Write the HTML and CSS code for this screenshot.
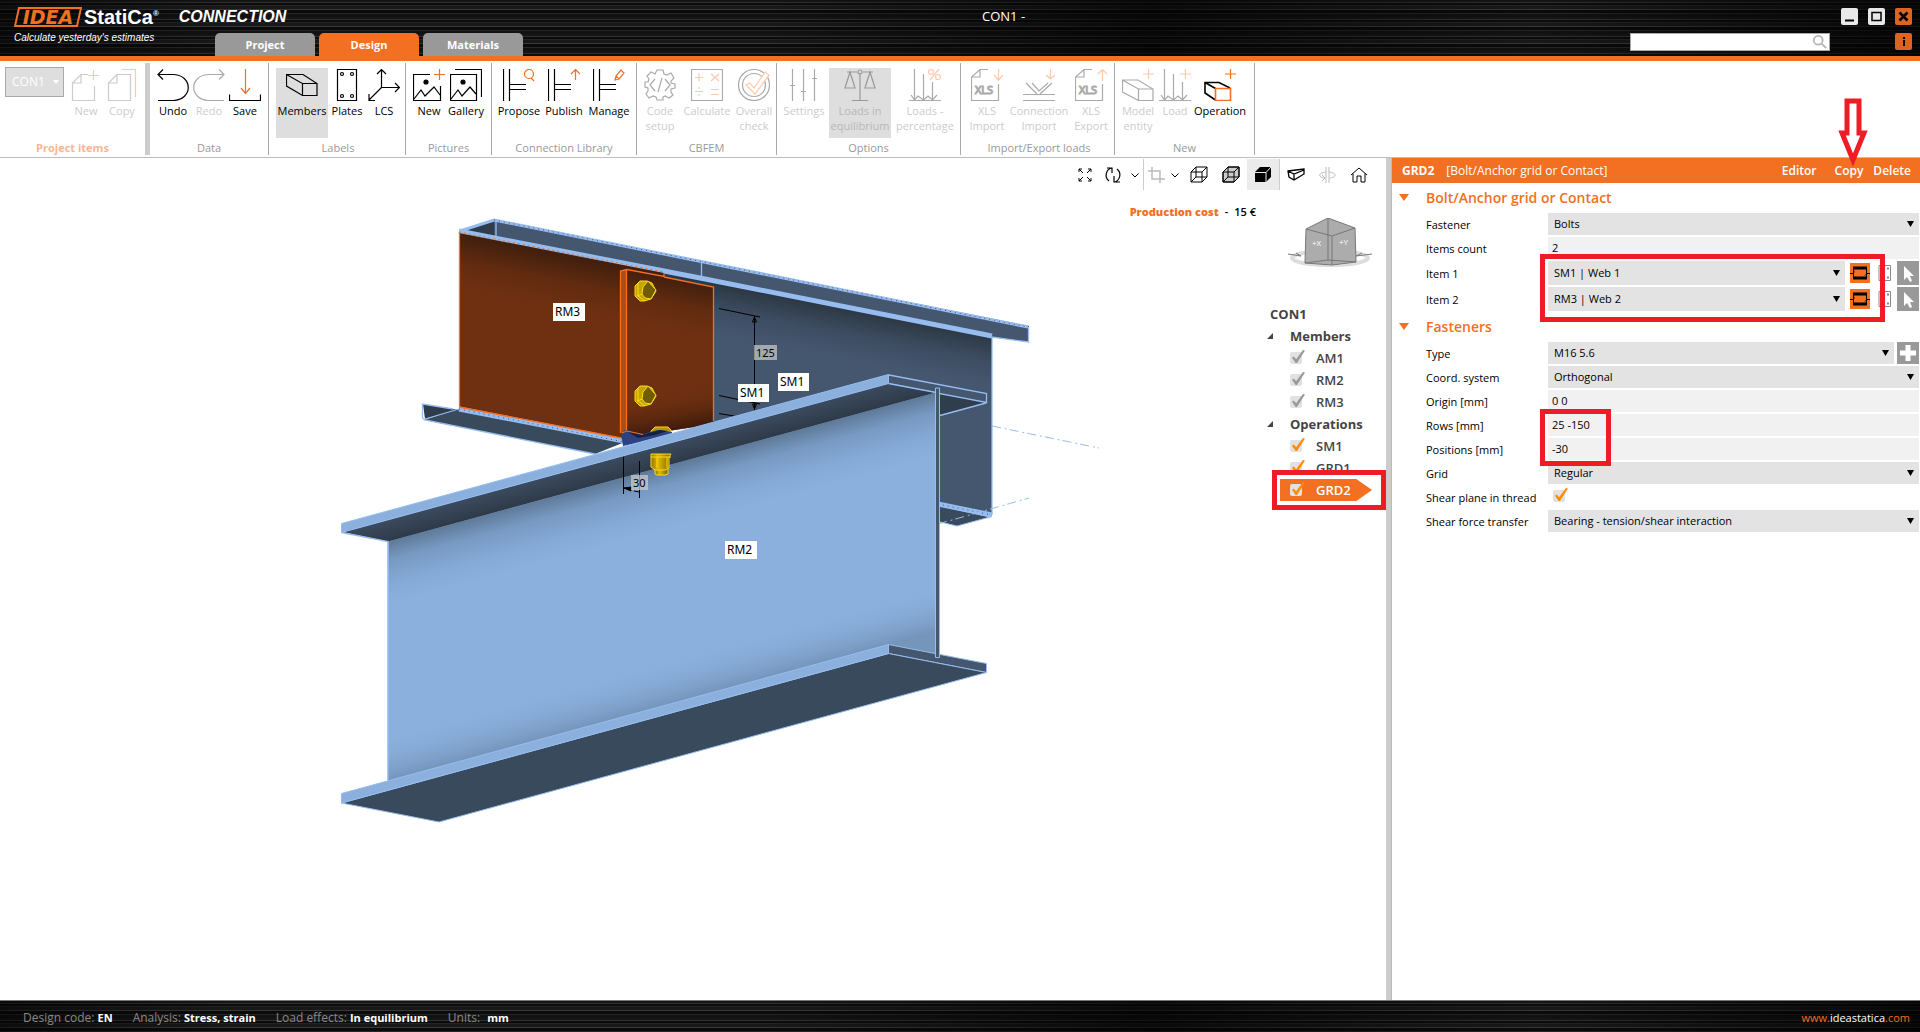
FILE: index.html
```html
<!DOCTYPE html>
<html lang="en">
<head>
<meta charset="utf-8">
<title>CON1 - IDEA StatiCa Connection</title>
<link rel="stylesheet" href="styles.css">
</head>
<body>
<svg class="defs" aria-hidden="true">
  <symbol id="doc-plus" viewBox="0 0 32 32"><path d="M18 5.500H11L2.500 14V31.500H24.500V17M11 5.500V14H2.500"/><path class="accent" d="M23.500 1V11M18 6.500H29"/></symbol>
  <symbol id="doc-copy" viewBox="0 0 32 32"><path d="M11 5.500H24.500V31.500H2.500V14ZM11 5.500V14H2.500"/><path class="accent" d="M16 .5H29.500V28"/></symbol>
  <symbol id="undo" viewBox="0 0 32 32"><path d="M1 31.500H17C36 30 36 7 17 5.500H1M6 .5L1 5.500L6 10.500"/></symbol>
  <symbol id="redo" viewBox="0 0 32 32"><path d="M31 31.500H15C-4 30 -4 7 15 5.500H31M26 .5L31 5.500L26 10.500"/></symbol>
  <symbol id="save" viewBox="0 0 32 32"><path d="M.5 25.500V31.500H31.500V25.500"/><path class="accent" d="M16.500 0V24M12 19L16.500 24.500L21 19"/></symbol>
  <symbol id="beam" viewBox="0 0 32 32"><path d="M.5 5.500H17L31 14.500V26.500H16.500L.5 17ZM.5 5.500L16.500 14.500V26.500M16.500 14.500H31"/></symbol>
  <symbol id="plates" viewBox="0 0 32 32"><path d="M6.500 .5H25.500V31.500H6.500Z"/><circle cx="11" cy="5" r="1.500"/><circle cx="21" cy="5" r="1.500"/><circle cx="11" cy="27" r="1.500"/><circle cx="21" cy="27" r="1.500"/></symbol>
  <symbol id="lcs" viewBox="0 0 32 32"><path d="M13.500 18.500V1M9 5L13.500 .5L18 5M13.500 18.500H31M27 14L31.500 18.500L27 23M13.500 18.500L1 31M1 25V31.500H7"/></symbol>
  <symbol id="pic-new" viewBox="0 0 32 32"><path d="M17 5.500H.5V31.500H27.500V17M1 30L8 21L12 27L21 18L27 26"/><circle class="solid" cx="13" cy="13" r="2"/><path class="accent" d="M26.500 0V11M21 5.500H32"/></symbol>
  <symbol id="gallery" viewBox="0 0 32 32"><path d="M.5 5.500H26.500V31.500H.5ZM5 .5H31.500V28M1 30L8 21L12 27L20 18L26 25"/><circle class="solid" cx="13" cy="13" r="2"/></symbol>
  <symbol id="lib-search" viewBox="0 0 32 32"><path d="M.5 0V32M6.500 0V32M6.500 15.500H23M6.500 20.500H23"/><circle class="accent" cx="26" cy="5" r="4.500"/><path class="accent" d="M28 9L31 12"/></symbol>
  <symbol id="lib-up" viewBox="0 0 32 32"><path d="M.5 0V32M6.500 0V32M6.500 15.500H23M6.500 20.500H23"/><path class="accent" d="M27.500 11V1M23 5L27.500 .5L32 5"/></symbol>
  <symbol id="lib-edit" viewBox="0 0 32 32"><path d="M.5 0V32M6.500 0V32M6.500 15.500H23M6.500 20.500H23"/><path class="accent" d="M22 11L23 7L28 1L31 4L26 10ZM23 7L26 10"/></symbol>
  <symbol id="gear" viewBox="0 0 32 32"><path d="M13 1H19L20 5L23 6L27 4L30 9L27 12V14L31 15V19L27 20L27 23L29 26L25 29L21 27L19 28V31H13L12 28L9 27L5 29L2 25L4 22L4 19L1 18V13L4 13L5 10L3 7L7 3L11 5ZM11 10L6 16L11 22M21 10L26 16L21 22M18 9L14 23"/></symbol>
  <symbol id="calc" viewBox="0 0 32 32"><path d="M.5 .5H31.500V31.500H.5Z"/><path class="accent" d="M4 8.500H12M8 4.500V12.500M20 5L28 12M28 5L20 12M4 22.500H12M8 18V20M8 25V27M20 20.500H28M20 25.500H28"/></symbol>
  <symbol id="overall" viewBox="0 0 32 32"><circle cx="16" cy="16" r="15.500"/><circle cx="16" cy="16" r="11.500"/><path class="accent halo" d="M8 16L12 14L16 19L27 3L31 6L17 25Z"/></symbol>
  <symbol id="sliders" viewBox="0 0 32 32"><path d="M4.500 0V32M15.500 0V32M26.500 0V32M2 16.500H7M13 22.500H18M24 9.500H29"/></symbol>
  <symbol id="scales" viewBox="0 0 32 32"><path d="M16 4V31M8 31.500H24M3 3H13M19 3H29M6 3L1 19H11ZM26 3L21 19H31Z"/><circle cx="16" cy="3" r="2"/></symbol>
  <symbol id="loads-pct" viewBox="0 0 32 32"><path d="M0 31.500H32M5.500 0V31M14.500 5V31M23.500 13V31M2 26L5.500 31L9 27L14.500 31L19 27L23.500 31L28 26"/><circle class="accent" cx="22" cy="3" r="2.500"/><circle class="accent" cx="29" cy="8" r="2.500"/><path class="accent" d="M30 0L21 11"/></symbol>
  <symbol id="xls-down" viewBox="0 0 32 32"><path d="M17 .5H9L.5 8V31.500H27.500V15M9 .5V8H.5"/><text x="4" y="25">XLS</text><path class="accent" d="M27.500 0V11M23 6L27.500 11L32 6"/></symbol>
  <symbol id="xls-up" viewBox="0 0 32 32"><path d="M17 .5H9L.5 8V31.500H27.500V15M9 .5V8H.5"/><text x="4" y="25">XLS</text><path class="accent" d="M27.500 1V12M23 5L27.500 .5L32 5"/></symbol>
  <symbol id="conn-import" viewBox="0 0 32 32"><path d="M0 25.500H32M0 31.500H32M3 14L14 25M9 14L16 22L25 14M17 25L29 14"/><path class="accent" d="M27.500 0V10M23 6L27.500 10L32 6"/></symbol>
  <symbol id="beam-plus" viewBox="0 0 32 32"><path d="M.5 11H16L31 20V31.500H16.500L.5 23ZM.5 11L16.500 20V31.500M16.500 20H31"/><path class="accent" d="M26.500 0V10M21 5H32"/></symbol>
  <symbol id="load-plus" viewBox="0 0 32 32"><path d="M0 31.500H32M5.500 0V31M14.500 5V31M23.500 13V31M2 26L5.500 31L9 27L14.500 31L19 27L23.500 31L28 26"/><path class="accent" d="M26.500 0V10M21 5H32"/></symbol>
  <symbol id="operation" viewBox="0 0 32 32"><path class="bold" d="M11.500 31L1 24V13.500H15L26 19M1 13.500L11.500 19.500"/><path class="accent bold" d="M11.500 19.500H26.500V31.500H11.500Z"/><path class="accent" d="M26.500 0V10M21 5H32"/></symbol>
  <symbol id="chev" viewBox="0 0 10 10"><path d="M1.500 3.500L5 7L8.500 3.500"/></symbol>
  <symbol id="section-i" viewBox="0 0 20 20"><path d="M3 5H17M3 15H17" stroke-width="3"/><path d="M3.500 5V15M16.500 5V15M0 10.500H3L4.500 8.500M15 12.500L17 10.500H20"/></symbol>
  <symbol id="section-p" viewBox="0 0 14 18"><path d="M1 1.500H12.500V16.500H1Z"/><path d="M9 4.500H11M9 13.500H11" stroke-width="2"/></symbol>
  <symbol id="cursor" viewBox="0 0 22 24"><path class="fill" d="M7 5V19L10 16L13 21L15 20L13 15H17Z"/></symbol>
</svg>

<div class="app">
  <header class="titlebar">
    <div class="brand">
      <div class="brand-line">
        <span class="logo"><svg class="logo-frame" viewBox="0 0 68 20" aria-hidden="true"><path d="M5 1H67L63 19H1Z"/></svg><b>IDEA</b></span>
        <span class="product">StatiCa<sup>®</sup></span>
        <span class="module">CONNECTION</span>
      </div>
      <p class="slogan">Calculate yesterday's estimates</p>
    </div>
    <nav class="tabs">
      <button class="tab">Project</button>
      <button class="tab active">Design</button>
      <button class="tab">Materials</button>
    </nav>
    <h1 class="title">CON1 -</h1>
    <div class="window-tools">
      <div class="window-buttons">
        <button class="wbtn" aria-label="Minimize"><svg viewBox="0 0 17 17"><path d="M4 12.500H13" stroke-width="2"/></svg></button>
        <button class="wbtn" aria-label="Maximize"><svg viewBox="0 0 17 17"><path d="M4 4.500H13V12.500H4Z" stroke-width="1.500"/></svg></button>
        <button class="wbtn hot-btn" aria-label="Close"><svg viewBox="0 0 17 17"><path d="M4.500 4.500L12.500 12.500M12.500 4.500L4.500 12.500" stroke-width="2.500"/></svg></button>
      </div>
      <div class="search-row">
        <label class="search"><input type="text" aria-label="Search"><svg viewBox="0 0 18 18"><circle cx="7" cy="7" r="5"/><path d="M11 11L16 16"/></svg></label>
        <button class="wbtn hot-btn" aria-label="Information"><svg viewBox="0 0 17 17"><path d="M9 7V13M9 4V6" stroke-width="2"/></svg></button>
      </div>
    </div>
  </header>

  <section class="ribbon">
    <div class="group items disabled">
      <div class="tools">
        <select class="project-select" aria-label="Project item" disabled><option>CON1</option></select>
        <button class="tool w36"><svg><use href="#doc-plus"/></svg>New</button>
        <button class="tool w36"><svg><use href="#doc-copy"/></svg>Copy</button>
      </div>
      <h2>Project items</h2>
    </div>
    <div class="group g-data">
      <div class="tools">
        <button class="tool w36"><svg><use href="#undo"/></svg>Undo</button>
        <button class="tool w36 off"><svg><use href="#redo"/></svg>Redo</button>
        <button class="tool w36"><svg><use href="#save"/></svg>Save</button>
      </div>
      <h2>Data</h2>
    </div>
    <div class="group g-labels">
      <div class="tools">
        <button class="tool w52 on"><svg><use href="#beam"/></svg>Members</button>
        <button class="tool w36"><svg><use href="#plates"/></svg>Plates</button>
        <button class="tool w36"><svg><use href="#lcs"/></svg>LCS</button>
      </div>
      <h2>Labels</h2>
    </div>
    <div class="group g-pictures">
      <div class="tools">
        <button class="tool w36"><svg><use href="#pic-new"/></svg>New</button>
        <button class="tool w36"><svg><use href="#gallery"/></svg>Gallery</button>
      </div>
      <h2>Pictures</h2>
    </div>
    <div class="group g-library">
      <div class="tools">
        <button class="tool w44"><svg><use href="#lib-search"/></svg>Propose</button>
        <button class="tool w44"><svg><use href="#lib-up"/></svg>Publish</button>
        <button class="tool w44"><svg><use href="#lib-edit"/></svg>Manage</button>
      </div>
      <h2>Connection Library</h2>
    </div>
    <div class="group g-cbfem disabled">
      <div class="tools">
        <button class="tool w36"><svg><use href="#gear"/></svg>Code<br>setup</button>
        <button class="tool w52"><svg><use href="#calc"/></svg>Calculate</button>
        <button class="tool w36"><svg><use href="#overall"/></svg>Overall<br>check</button>
      </div>
      <h2>CBFEM</h2>
    </div>
    <div class="group g-options disabled">
      <div class="tools">
        <button class="tool w44"><svg><use href="#sliders"/></svg>Settings</button>
        <button class="tool w62 on"><svg><use href="#scales"/></svg>Loads in<br>equilibrium</button>
        <button class="tool w62"><svg><use href="#loads-pct"/></svg>Loads -<br>percentage</button>
      </div>
      <h2>Options</h2>
    </div>
    <div class="group g-loads disabled">
      <div class="tools">
        <button class="tool w36"><svg><use href="#xls-down"/></svg>XLS<br>Import</button>
        <button class="tool w62"><svg><use href="#conn-import"/></svg>Connection<br>Import</button>
        <button class="tool w36"><svg><use href="#xls-up"/></svg>XLS<br>Export</button>
      </div>
      <h2>Import/Export loads</h2>
    </div>
    <div class="group g-new">
      <div class="tools">
        <button class="tool w36 off"><svg><use href="#beam-plus"/></svg>Model<br>entity</button>
        <button class="tool w36 off"><svg><use href="#load-plus"/></svg>Load</button>
        <button class="tool w52"><svg><use href="#operation"/></svg>Operation</button>
      </div>
      <h2>New</h2>
    </div>
  </section>

  <main class="workspace">
    <section class="viewport">
      <svg class="model" viewBox="0 158 1386 842" preserveAspectRatio="xMinYMin meet" role="img" aria-label="3D model of the connection">
        <defs>
          <linearGradient id="webTop" gradientUnits="userSpaceOnUse" x1="600" y1="484" x2="616" y2="543"><stop offset="0" stop-color="#5f7a99"/><stop offset=".3" stop-color="#7799c2"/><stop offset=".7" stop-color="#86aad8"/><stop offset="1" stop-color="#8bb0de"/></linearGradient>
          <linearGradient id="webBottom" gradientUnits="userSpaceOnUse" x1="600" y1="723" x2="588" y2="679"><stop offset="0" stop-color="#7595bb"/><stop offset="1" stop-color="#8bb0de" stop-opacity="0"/></linearGradient>
          <linearGradient id="under" gradientUnits="userSpaceOnUse" x1="600" y1="462" x2="606" y2="484"><stop offset="0" stop-color="#3b4b5f"/><stop offset="1" stop-color="#2d3846"/></linearGradient>
          <linearGradient id="rear" gradientUnits="userSpaceOnUse" x1="850" y1="310" x2="841" y2="357"><stop offset="0" stop-color="#2c3844"/><stop offset=".5" stop-color="#3d4c61"/><stop offset="1" stop-color="#45566f"/></linearGradient>
          <linearGradient id="rust" gradientUnits="userSpaceOnUse" x1="590" y1="262" x2="580" y2="312"><stop offset="0" stop-color="#43200d"/><stop offset=".5" stop-color="#622b10"/><stop offset="1" stop-color="#6f3011"/></linearGradient>
          <linearGradient id="rustLow" gradientUnits="userSpaceOnUse" x1="670" y1="390" x2="677" y2="430"><stop offset="0" stop-color="#6f3011" stop-opacity="0"/><stop offset="1" stop-color="#3d1b0a"/></linearGradient>
          <linearGradient id="gold" x1="0" x2="1" y1="0" y2="0"><stop offset="0" stop-color="#8f7400"/><stop offset=".35" stop-color="#e0b900"/><stop offset="1" stop-color="#7b6500"/></linearGradient>
          <g id="head"><path d="M-10 -5L-5 -10H2L7 -8L11 0L6 8L-1 10H-5L-10 5Z" fill="#c5a300" stroke="#ffd91a"/><path d="M-2 -4L3 -10L11 -1L6 8L0 7L-3 3Z" fill="#6f5d00" stroke="#ffd91a"/><path d="M-7 -8V5L0 10M-3 3L-8 5" fill="none" stroke="#ffd91a"/></g>
        </defs>
        <!-- rear channel -->
        <path d="M600 258L992 336V516L720 480Z" fill="url(#rear)"/>
        <path d="M459 231L494 220L1029 326V342L992 337Z" fill="#45566f"/>
        <path d="M462 230L494 222V236Z" fill="#2f3c4b"/>
        <path class="edge3" d="M460 231L494 220L1028 327"/>
        <path d="M459 231L700 278L992 336" fill="none" stroke="#96bcf0" stroke-width="5"/>
        <path class="edge" d="M496 221V237M701.500 262V278M1028.500 327V342L992 337V515"/>
        <path class="dots" d="M494 220L1028 327"/>
        <path d="M936 505L990 517L957 526L936 521Z" fill="#3a4a5d" stroke="#96bcf0"/>
        <path class="edge4" d="M938 504L992 515"/><path class="dots" d="M938 504L992 515"/>
        <path class="axis" d="M992 426L1099 448M938 524L1029 498"/>
        <!-- left channel -->
        <path d="M423 404L459 410L425 419Z" fill="#2f3c4b"/>
        <path d="M424 420L458 409L625 442L595 454Z" fill="#3a4a5d"/>
        <path class="edge" d="M453 409L422.500 404V418L425 420L595 454M425 419L459 409"/>
        <path d="M459 233L664 273V284L714 287V424L622 438L459 407Z" fill="url(#rust)"/>
        <path d="M627 270L714 287V424L627 432Z" fill="url(#rust)"/>
        <path d="M622 380H714V424L622 438Z" fill="url(#rustLow)"/>
        <path class="edge4" d="M459 409L624 441"/><path class="dots" d="M459 409L624 442"/>
        <path d="M621 271L627 269V433H621Z" fill="#a94d19"/>
        <path class="hot" d="M459.500 407V232M459 407L621 438M620.500 433V271L627 269.500L664 276.500V273M626.500 270V432M664 277L713.500 287V421"/>
        <path d="M459 232L664 272" fill="none" stroke="#f36f21" stroke-dasharray="2 3"/>
        <use href="#head" x="645" y="291"/><use href="#head" x="645" y="396"/>
        <path d="M651 431L655 427H668L671 430V437H651Z" fill="#b69500" stroke="#ffd91a"/>
        <path d="M621 434L625 430L642 434L658 430L672 432V436L623 446Z" fill="#2d4283"/>
        <path d="M628 432L642 435L660 430L668 431L655 435L638 438Z" fill="#17203d"/>
        <path d="M622 433L627 431L643 434.500" fill="none" stroke="#f36f21"/>
        <!-- dimension in the back -->
        <path class="dim" d="M719 308.500L760 317M754.500 316V410M719 395.500L760 404M719 413.500L734 416M754.500 317L752.500 322H756.500ZM754.500 409L752.500 404H756.500Z"/>
        <!-- front beam -->
        <path d="M889 375L986 393V403L889 384Z" fill="#45566f"/>
        <path d="M936 392L984 403L940 415Z" fill="#303d4c"/>
        <path class="edge" d="M889 375L986.500 393.500V402.500L889 384M986 403L940 415.500"/>
        <path d="M388 541L936 392V654L888 645L388 781Z" fill="url(#webTop)" stroke="#96bcf0"/>
        <path d="M388 720L888 584L936 594V654L888 645L388 781Z" fill="url(#webBottom)"/>
        <path d="M342 532L889 383.500L936 392.500L388 541.500Z" fill="url(#under)"/>
        <path d="M341.500 523.500L888.500 374.500V383.500L341.500 532.500Z" fill="#8bb0de" stroke="#96bcf0"/>
        <path class="edge" d="M341.500 532.500L388 541.500V780M888.500 383.500L936 392.500"/>
        <path d="M888.500 644.500L986.500 663.500V672.500L888.500 653.500Z" fill="#45566f" stroke="#96bcf0"/>
        <path d="M341.500 803L888.500 653.500L986.500 672.500L439 822Z" fill="#3a4a5d" stroke="#96bcf0"/>
        <path d="M341.500 793.500L888.500 644.500V653.500L341.500 803Z" fill="#8bb0de" stroke="#96bcf0"/>
        <path d="M935.500 388V657.500H939.500V388Z" fill="#45566f" stroke="#96bcf0"/>
        <!-- lower bolt -->
        <path d="M655 468H668V474L665 475H657L655 474Z" fill="url(#gold)" stroke="#ffd91a"/>
        <path d="M651 454H671L669 457V468L665 470H655L651 467Z" fill="url(#gold)" stroke="#ffd91a"/>
        <path d="M651 457H671M657 457V468M667 457V468" fill="none" stroke="#ffd91a"/>
        <path class="dim" d="M623.500 457V494M639.500 461V498M624 488L631 490M634 491L639 492"/>
        <path class="dim" d="M624 488L631 487V491Z" fill="#000"/>
        <g class="tags"><rect class="dimtag" x="754" y="345" width="23" height="15"/><text x="756" y="357" class="small">125</text>
          <rect class="dimtag" x="631" y="475" width="17" height="15"/><text x="633" y="487" class="small">30</text>
          <rect x="553" y="303" width="32" height="18"/><text x="555" y="316">RM3</text>
          <rect x="738" y="384" width="31" height="18"/><text x="740" y="397">SM1</text>
          <rect x="778" y="373" width="31" height="18"/><text x="780" y="386">SM1</text>
          <rect x="725" y="541" width="32" height="18"/><text x="727" y="554">RM2</text></g>
      </svg>

      <div class="overlay">
        <div class="viewbar">
          <button class="vb w28" aria-label="Zoom all"><svg viewBox="0 0 18 18"><path d="M3 6V3H6M3 3L7 7M12 3H15V6M15 3L11 7M3 12V15H6M3 15L7 11M12 15H15V12M15 15L11 11"/></svg></button>
          <button class="vb w28" aria-label="Rotate"><svg viewBox="0 0 18 18"><path d="M5 15C0 11 2 3 8 2M3 2H8V7M13 3C18 7 16 14 11 16M16 16H10V10" stroke-width="1.200"/></svg></button>
          <button class="vb w16" aria-label="Rotate options"><svg class="mini"><use href="#chev"/></svg></button>
          <button class="vb w24 rule-left pale" aria-label="Crop"><svg viewBox="0 0 18 18"><path d="M5 1V13H18M1 5H13V17" stroke-width="1.500"/></svg></button>
          <button class="vb w16" aria-label="Crop options"><svg class="mini"><use href="#chev"/></svg></button>
          <button class="vb" aria-label="Wireframe"><svg viewBox="0 0 18 18"><path d="M1 6H12V16H1ZM1 6L6 1H17L12 6M17 1V11L12 16M6 1V11H17M6 11L1 16"/></svg></button>
          <button class="vb" aria-label="Transparent"><svg viewBox="0 0 18 18"><path d="M1 6L6 1H17V11L12 16H1Z" fill="#ccc"/><path d="M1 6H12V16H1ZM1 6L6 1H17L12 6M17 1V11L12 16M6 1V11H17M6 11L1 16"/></svg></button>
          <button class="vb pressed" aria-label="Solid"><svg viewBox="0 0 18 18"><path class="fill" d="M1 6L6 1H17V11L12 16H1Z"/><path d="M1 6.500H12L17 1M12 6.500V16" stroke="#ebebeb"/></svg></button>
          <button class="vb rule-left" aria-label="Members"><svg viewBox="0 0 18 18"><path d="M1 5L9 4L17 3V8L7 14L2 11ZM1 5L7 8L17 4M7 8V14" stroke-width="1.300"/></svg></button>
          <button class="vb pale" aria-label="Mirror"><svg viewBox="0 0 18 18"><path d="M8 1V17M11 1V17M8 6C0 7 0 11 6 12M11 6C19 7 19 11 12 12M4 9L7 12L4 15"/></svg></button>
          <button class="vb" aria-label="Home"><svg viewBox="0 0 18 18"><path d="M1 9L9 2L17 9M3 7.500V16H7V10H11V16H15V7.500"/></svg></button>
        </div>
        <p class="cost"><b>Production cost</b> <span>-</span> <span>15 €</span></p>
        <svg class="navcube" viewBox="0 0 84 50" aria-hidden="true">
          <ellipse cx="42" cy="40" rx="38" ry="7" fill="none" stroke="#ddd" stroke-width="4"/>
          <path d="M18 11L40 0L67 10L68 44L44 47L17 45Z" fill="#acacac" stroke="#777"/>
          <path d="M18 11L44 18L67 10M44 18V47M40 0V42L17 45M40 42L68 44" fill="none" stroke="#777"/>
          <path d="M0 36L13 38L8 35M84 36L68 38L74 35" fill="none" stroke="#777"/>
          <text x="24" y="28">+X</text><text x="51" y="27">+Y</text>
        </svg>
        <div class="tree">
          <p class="root">CON1</p>
          <p class="branch">Members</p>
          <label class="leaf locked"><input type="checkbox" checked>AM1</label>
          <label class="leaf locked"><input type="checkbox" checked>RM2</label>
          <label class="leaf locked"><input type="checkbox" checked>RM3</label>
          <p class="branch">Operations</p>
          <label class="leaf"><input type="checkbox" checked>SM1</label>
          <label class="leaf"><input type="checkbox" checked>GRD1</label>
          <label class="leaf selected"><input type="checkbox" checked>GRD2</label>
        </div>
      </div>
    </section>

    <div class="splitter"></div>

    <aside class="panel">
      <header class="panel-head">
        <b>GRD2</b><span class="kind">[Bolt/Anchor grid or Contact]</span>
        <button>Editor</button><button class="pointed">Copy<svg class="arrow" viewBox="0 0 30 68"><path d="M9 3H21V35H26L15 62L4 35H9Z"/></svg></button><button>Delete</button>
      </header>
      <section class="props">
        <h3>Bolt/Anchor grid or Contact</h3>
        <div class="row"><label for="fastener">Fastener</label><select id="fastener"><option>Bolts</option></select></div>
        <div class="row"><label for="count">Items count</label><input id="count" type="text" value="2"></div>
        <div class="marked wide">
          <div class="row tall"><label for="item1">Item 1</label><select id="item1"><option>SM1 | Web 1</option></select>
            <button class="sq section" aria-label="Member"><svg><use href="#section-i"/></svg></button><button class="sq plate" aria-label="Plate"><svg><use href="#section-p"/></svg></button><button class="sq pick" aria-label="Pick"><svg><use href="#cursor"/></svg></button></div>
          <div class="row tall"><label for="item2">Item 2</label><select id="item2"><option>RM3 | Web 2</option></select>
            <button class="sq section" aria-label="Member"><svg><use href="#section-i"/></svg></button><button class="sq plate" aria-label="Plate"><svg><use href="#section-p"/></svg></button><button class="sq pick" aria-label="Pick"><svg><use href="#cursor"/></svg></button></div>
        </div>
      </section>
      <section class="props">
        <h3>Fasteners</h3>
        <div class="row"><label for="type">Type</label><select id="type"><option>M16 5.6</option></select><button class="sq add" aria-label="Add"><svg viewBox="0 0 22 22"><path d="M11 3V19M3 11H19"/></svg></button></div>
        <div class="row"><label for="coord">Coord. system</label><select id="coord"><option>Orthogonal</option></select></div>
        <div class="row"><label for="origin">Origin [mm]</label><input id="origin" type="text" value="0 0"></div>
        <div class="marked narrow">
          <div class="row"><label for="rows">Rows [mm]</label><input id="rows" type="text" value="25 -150"></div>
          <div class="row"><label for="positions">Positions [mm]</label><input id="positions" type="text" value="-30"></div>
        </div>
        <div class="row"><label for="grid">Grid</label><select id="grid"><option>Regular</option></select></div>
        <div class="row"><label for="shear">Shear plane in thread</label><input id="shear" type="checkbox" checked></div>
        <div class="row"><label for="transfer">Shear force transfer</label><select id="transfer"><option>Bearing - tension/shear interaction</option></select></div>
      </section>
    </aside>
  </main>

  <footer class="status">
    <span>Design code: <b>EN</b></span>
    <span>Analysis: <b>Stress, strain</b></span>
    <span>Load effects: <b>In equilibrium</b></span>
    <span>Units: <b class="unit">mm</b></span>
    <a href="#">www.<em>ideastatica</em>.com</a>
  </footer>
</div>
</body>
</html>
```
FILE: styles.css
```css
:root {
  --orange: #f36f21;
  --red: #ee1c24;
  --sky: #96bcf0;
}
*, *::before, *::after { box-sizing: border-box; }
body {
  margin: 0;
  font: 12px/14px "Open Sans", "Noto Sans", sans-serif;
  color: #000;
  background: #fff;
}
h1, h2, h3, p { margin: 0; }
button, input, select { font: inherit; color: inherit; border: 0; padding: 0; background: none; border-radius: 0; }
svg { fill: none; stroke: currentColor; }
.fill { fill: currentColor; stroke: none; }
.defs { display: none; }
.app { min-height: 100vh; display: flex; flex-direction: column; }

/* title bar */
.titlebar, .status {
  background:
    linear-gradient(90deg, rgba(0,0,0,.5), transparent 12%, transparent 40%, rgba(0,0,0,.6) 60%, transparent 80%, rgba(0,0,0,.7)),
    repeating-linear-gradient(180deg, #151515 0 2px, #303030 2px 3px, #0c0c0c 3px 5px, #242424 5px 6px, #181818 6px 9px, #383838 9px 10px, #0a0a0a 10px 13px, #262626 13px 14px, #111 14px 17px),
    #111;
}
.titlebar {
  height: 61px;
  border-bottom: 5px solid var(--orange);
  color: #fff;
  display: grid;
  grid-template-columns: 215px 6fr auto 7fr;
}
.brand { padding: 6px 0 0 14px; white-space: nowrap; font-style: italic; }
.brand-line { display: flex; align-items: center; height: 21px; }
.logo { display: grid; width: 68px; height: 20px; color: var(--orange); align-items: center; justify-items: center; }
.logo > * { grid-area: 1 / 1; }
.logo b { font: italic 900 19px/20px "DejaVu Sans", sans-serif; }
.logo-frame { width: 68px; height: 20px; stroke-width: 2; }
.product { margin-left: 2px; font: 700 20px/20px "Liberation Sans", sans-serif; }
.product sup { font-size: 8px; line-height: 8px; vertical-align: 8px; }
.module { margin-left: 20px; font: italic 700 16px/20px "Liberation Sans", sans-serif; }
.slogan { margin-top: 5px; font: italic 400 10px/12px "Liberation Sans", sans-serif; }
.tabs { display: flex; gap: 4px; align-items: flex-end; }
.tab {
  width: 100px; height: 23px; border-radius: 5px 5px 0 0;
  background: #999; font-weight: 700; font-size: 11px;
}
.tab.active { background: var(--orange); }
.title { font-size: 13px; font-weight: 400; line-height: 16px; padding-top: 8px; }
.window-tools { padding: 8px 8px 0 0; display: flex; flex-direction: column; gap: 8px; align-items: flex-end; }
.window-buttons { display: flex; gap: 10px; }
.search-row { display: flex; gap: 65px; }
.wbtn { width: 17px; height: 17px; border-radius: 2px; background: #e8e8e8; color: #000; }
.wbtn.hot-btn { background: #dd6420; }
.wbtn svg { display: block; width: 17px; height: 17px; }
.search { display: flex; align-items: center; width: 200px; height: 18px; background: #fff; border: 1px solid #aaa; }
.search input { flex: 1; min-width: 0; color: #000; height: 16px; }
.search svg { width: 18px; height: 16px; color: #b5b5b5; stroke-width: 2; }

/* ribbon */
.ribbon { display: flex; height: 97px; border-bottom: 1px solid #bdbdbd; padding: 2px 0; overflow: hidden; }
.group { display: flex; flex-direction: column; flex: none; padding: 4px 0 0 5px; border-right: 1px solid #aaa; }
.tools { display: flex; height: 74px; gap: 1px; }
.group h2 { font-size: 11px; line-height: 14px; font-weight: 400; color: #999; text-align: center; margin-left: -5px; }
.items { width: 150px; border-right: 5px solid #ccc; }
.items h2 { color: #f9b68f; font-weight: 700; }
.items .tools, .g-data .tools { gap: 0; }
.g-data { width: 119px; }
.g-labels { width: 137px; padding-left: 7px; }
.g-pictures { width: 86px; }
.g-library { width: 145px; }
.g-cbfem { width: 140px; }
.g-cbfem .tools, .g-options .tools, .g-loads .tools { gap: 3px; }
.g-options { width: 184px; }
.g-loads { width: 154px; padding-left: 8px; }
.g-new { width: 140px; }
.tool {
  display: flex; flex-direction: column; align-items: center; justify-content: flex-start;
  height: 70px; padding-top: 1px; margin-top: 1px;
  font-size: 11px; line-height: 15px; white-space: nowrap; text-align: center;
  color: #000;
}
.tool { display: block; }
.tool svg { display: block; width: 32px; height: 32px; margin: 0 auto 2px; stroke-width: 1.200; }
.tool text { font-size: 13px; fill: currentColor; stroke: none; font-family: Lato, sans-serif; }
.accent { stroke: var(--orange); }
.halo { fill: #fff; }
.bold { stroke-width: 1.600; }
.solid { fill: currentColor; }
.w36 { width: 36px; } .w44 { width: 44px; } .w52 { width: 52px; } .w62 { width: 62px; }
.tool.on { background: #dedede; }
.disabled .tool, .tool.off { color: #ccc; }
.disabled .tool svg, .tool.off svg { color: #aaa; --orange: #fbc9ab; }
.disabled .tool.on { color: #b8b8b8; }
.disabled .tool.on svg { color: #999; }
.items .tool svg { color: #ccc; }
.tool { display: flex; }
.project-select {
  appearance: none; width: 59px; height: 30px; margin-right: 4px; padding-left: 6px;
  border: 1px solid #aaa; color: #fff; opacity: 1; font-size: 12px;
  background: #dedede url("data:image/svg+xml,%3Csvg xmlns='http://www.w3.org/2000/svg' width='6' height='4'%3E%3Cpath d='M0 0h6L3 4z' fill='white'/%3E%3C/svg%3E") no-repeat right 4px center;
}

/* workspace */
.workspace { flex: 1; display: grid; grid-template-columns: minmax(0, 1fr) 6px 528px; }
.splitter { background: #ccc; border-right: 1px solid #bbb; }
.viewport { display: grid; overflow: hidden; }
.viewport > * { grid-area: 1 / 1; }
.model { width: 100%; height: 100%; stroke: none; }
.edge, .edge3, .edge4 { stroke: var(--sky); fill: none; }
.edge { stroke-width: 1.300; }
.edge3 { stroke-width: 3; }
.edge4 { stroke-width: 5; }
.dots { stroke: #45566f; stroke-width: 1; stroke-dasharray: 1 4; }
.axis { stroke: var(--sky); stroke-dasharray: 9 4 2 3; }
.hot { fill: none; stroke: var(--orange); stroke-width: 1.300; }
.dim { stroke: #000; }
.tags rect { fill: #fff; }
.tags .dimtag { fill: rgba(205, 205, 205, .7); }
.tags text { font: 12px "Noto Sans", sans-serif; fill: #000; }
.tags .small { font-size: 11px; }

.overlay { justify-self: end; display: flex; flex-direction: column; align-items: flex-end; }
.viewbar { display: flex; padding: 1px 11px 0 0; }
.vb { width: 32px; height: 31px; display: grid; place-items: center; color: #000; }
.vb svg { width: 18px; height: 18px; }
.vb .mini { width: 10px; height: 10px; }
.vb.w28 { width: 28px; } .vb.w24 { width: 24px; } .vb.w16 { width: 16px; }
.vb.pale { color: #bbb; }
.vb.pressed { background: #ebebeb; }
.rule-left { border-left: 1px solid #ccc; }
.cost { display: flex; gap: 6px; margin: 14px 130px 0 0; font-weight: 600; font-size: 11px; line-height: 16px; }
.cost b { color: var(--orange); }
.navcube { width: 84px; height: 50px; margin: -2px 14px 0 0; }
.navcube text { fill: #fff; stroke: none; font-size: 8px; }
.tree { width: 120px; margin-top: 35px; color: #444; font-size: 13px; line-height: 22px; font-weight: 600; }
.root { padding-left: 4px; font-weight: 700; }
.branch { display: flex; align-items: center; gap: 17px; padding-left: 1px; font-weight: 700; }
.branch::before { content: ""; width: 6px; height: 6px; background: #444; clip-path: polygon(100% 0, 100% 100%, 0 100%); }
.leaf { display: flex; align-items: center; height: 22px; padding-left: 24px; gap: 14px; position: relative; }
input[type="checkbox"] {
  appearance: none; margin: 0; width: 12px; height: 12px; flex: none;
  border-radius: 2px; background: #e1e1e1; position: relative;
}
input[type="checkbox"]::after {
  content: ""; position: absolute; left: 2px; top: -2px; width: 13px; height: 13px;
  background: #ff8c00; clip-path: polygon(0 60%, 14% 50%, 32% 72%, 84% 0, 100% 4%, 38% 100%, 28% 100%);
}
.locked input[type="checkbox"]::after { background: #999; }
.selected { color: #fff; isolation: isolate; }
.selected::before {
  content: ""; position: absolute; z-index: -1; left: 14px; top: 0; width: 92px; height: 22px;
  background: var(--orange); clip-path: polygon(0 0, 83% 0, 100% 50%, 83% 100%, 0 100%);
}
.selected::after { content: ""; position: absolute; left: 6px; top: -9px; width: 114px; height: 40px; border: 5px solid var(--red); }

/* property panel */
.panel-head { display: flex; align-items: center; height: 25px; padding: 0 9px 0 10px; background: var(--orange); color: #fff; position: relative; font-size: 12px; }
.kind { margin: 0 auto 0 12px; }
.panel-head button { font-weight: 600; position: relative; margin-left: 10px; }
.panel-head .pointed { margin-left: 18px; }
.arrow { position: absolute; left: 3px; bottom: 12px; width: 30px; height: 68px; stroke: var(--red); stroke-width: 5; }
.props { padding: 5px 1px 0 34px; display: flex; flex-direction: column; gap: 2px; }
.props h3 { position: relative; font-size: 14px; line-height: 20px; font-weight: 600; color: var(--orange); padding-bottom: 3px; }
.props h3::before { content: ""; position: absolute; left: -27px; top: 6px; width: 10px; height: 7px; background: var(--orange); clip-path: polygon(0 0, 100% 0, 50% 100%); }
.row { display: flex; height: 22px; align-items: center; }
.row.tall { height: 24px; }
.row label { width: 122px; flex: none; white-space: nowrap; font-size: 11px; padding-top: 1px; }
.row select, .row input[type="text"] { flex: 1; min-width: 0; height: 100%; padding: 0 0 1px 6px; font-size: 11px; }
.row input[type="text"] { background: #f1f1f1; padding-left: 4px; }
.row select {
  appearance: none;
  background: #e3e3e3 url("data:image/svg+xml,%3Csvg xmlns='http://www.w3.org/2000/svg' width='7' height='6'%3E%3Cpath d='M0 0h7L3.5 6z'/%3E%3C/svg%3E") no-repeat right 5px center;
}
.row input[type="checkbox"] { margin: 0 0 2px 5px; }
.marked { display: flex; flex-direction: column; gap: 2px; position: relative; }
.marked::after { content: ""; position: absolute; border: 5px solid var(--red); pointer-events: none; }
.wide::after { left: 114px; top: -7px; width: 345px; height: 68px; }
.narrow::after { left: 114px; top: -5px; width: 71px; height: 57px; }
.props:first-of-type { padding-bottom: 1px; }
.sq { width: 22px; height: 100%; display: grid; place-items: center; flex: none; }
.sq svg { width: 22px; height: 24px; }
.sq.section { width: 20px; height: 20px; margin-left: 5px; background: var(--orange); }
.sq.section svg { width: 20px; height: 20px; }
.sq.plate { width: 14px; margin-left: 8px; color: #888; }
.sq.plate svg { width: 14px; height: 18px; }
.sq.pick { margin-left: 5px; background: #999; color: #fff; }
.sq.add { margin-left: 3px; background: #999; color: #fff; }
.sq.add svg { width: 22px; height: 22px; stroke-width: 5; }

/* status bar */
.status { height: 32px; border-top: 1px solid #777; display: flex; align-items: center; gap: 20px; padding: 3px 10px 0 23px; color: #888; font-size: 12px; }
.status b { color: #fff; font-size: 11px; }
.status .unit { margin-left: 4px; }
.status a { margin-left: auto; color: var(--orange); text-decoration: none; font-size: 11px; }
.status em { color: #fff; font-style: normal; }
```
